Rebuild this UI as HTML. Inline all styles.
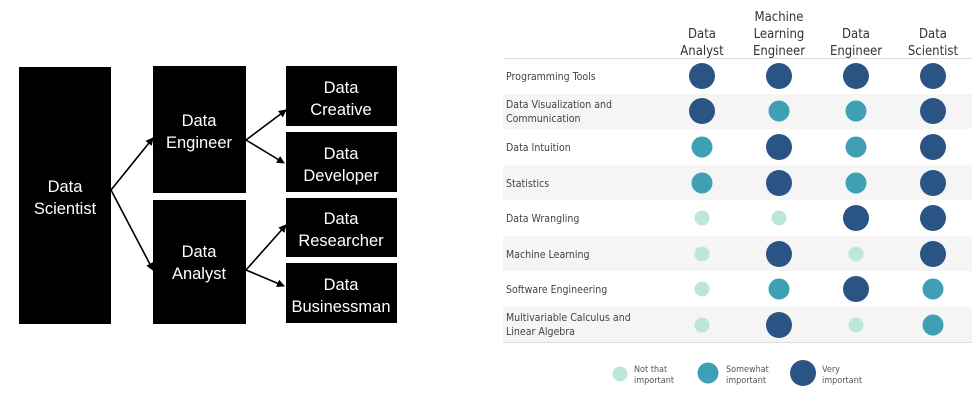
<!DOCTYPE html>
<html><head><meta charset="utf-8"><style>
html,body{margin:0;padding:0;background:#fff;width:978px;height:400px;overflow:hidden}
svg{display:block}
.b{font-family:"Liberation Sans",sans-serif;fill:#fff;font-size:16.5px;text-anchor:middle}
.h{font-family:"DejaVu Sans Condensed","Liberation Sans",sans-serif;fill:#333;font-size:13px;text-anchor:middle}
.r{font-family:"DejaVu Sans Condensed","Liberation Sans",sans-serif;fill:#444;font-size:10.5px}
.l{font-family:"DejaVu Sans Condensed","Liberation Sans",sans-serif;fill:#555;font-size:9px}
</style></head><body>
<svg width="978" height="400" viewBox="0 0 978 400" xmlns="http://www.w3.org/2000/svg">
<defs><marker id="a" markerWidth="8" markerHeight="8" refX="7" refY="4" orient="auto" markerUnits="userSpaceOnUse"><path d="M0,0 L8,4 L0,8 z" fill="#000"/></marker></defs>
<rect x="19" y="67" width="92" height="257" fill="#000"/>
<rect x="153" y="66" width="93" height="127" fill="#000"/>
<rect x="153" y="200" width="93" height="124" fill="#000"/>
<rect x="286" y="66" width="111" height="60" fill="#000"/>
<rect x="286" y="132" width="111" height="60" fill="#000"/>
<rect x="286" y="198" width="111" height="59" fill="#000"/>
<rect x="286" y="263" width="111" height="60" fill="#000"/>
<text class="b" x="65" y="192">Data</text><text class="b" x="65" y="214">Scientist</text>
<text class="b" x="199" y="126">Data</text><text class="b" x="199" y="148">Engineer</text>
<text class="b" x="199" y="257">Data</text><text class="b" x="199" y="279">Analyst</text>
<text class="b" x="341" y="93">Data</text><text class="b" x="341" y="115">Creative</text>
<text class="b" x="341" y="159">Data</text><text class="b" x="341" y="181">Developer</text>
<text class="b" x="341" y="224">Data</text><text class="b" x="341" y="246">Researcher</text>
<text class="b" x="341" y="290">Data</text><text class="b" x="341" y="312">Businessman</text>
<g stroke="#000" stroke-width="1.6" marker-end="url(#a)">
<line x1="111" y1="190" x2="153" y2="138"/>
<line x1="111" y1="190" x2="153" y2="270"/>
<line x1="246" y1="140" x2="286" y2="110"/>
<line x1="246" y1="140" x2="284" y2="163"/>
<line x1="246" y1="270" x2="286" y2="225"/>
<line x1="246" y1="270" x2="284" y2="286"/>
</g>
<g fill="#f5f5f5"><rect x="503" y="94" width="469" height="35"/><rect x="503" y="165" width="469" height="35"/><rect x="503" y="236" width="469" height="35"/><rect x="503" y="307" width="469" height="35"/></g>
<line x1="503" y1="58.5" x2="972" y2="58.5" stroke="#ddd"/>
<line x1="503" y1="342.5" x2="972" y2="342.5" stroke="#ddd"/>
<text class="h" x="702" y="38">Data</text><text class="h" x="702" y="55">Analyst</text>
<text class="h" x="779" y="21">Machine</text><text class="h" x="779" y="38">Learning</text><text class="h" x="779" y="55">Engineer</text>
<text class="h" x="856" y="38">Data</text><text class="h" x="856" y="55">Engineer</text>
<text class="h" x="933" y="38">Data</text><text class="h" x="933" y="55">Scientist</text>
<text class="r" x="506" y="80">Programming Tools</text>
<text class="r" x="506" y="108">Data Visualization and</text><text class="r" x="506" y="122">Communication</text>
<text class="r" x="506" y="151">Data Intuition</text>
<text class="r" x="506" y="187">Statistics</text>
<text class="r" x="506" y="222">Data Wrangling</text>
<text class="r" x="506" y="258">Machine Learning</text>
<text class="r" x="506" y="293">Software Engineering</text>
<text class="r" x="506" y="321">Multivariable Calculus and</text><text class="r" x="506" y="335">Linear Algebra</text>
<g>
<circle cx="702" cy="76" r="13" fill="#2a5483"/><circle cx="779" cy="76" r="13" fill="#2a5483"/><circle cx="856" cy="76" r="13" fill="#2a5483"/><circle cx="933" cy="76" r="13" fill="#2a5483"/>
<circle cx="702" cy="111" r="13" fill="#2a5483"/><circle cx="779" cy="111" r="10.5" fill="#3fa0b5"/><circle cx="856" cy="111" r="10.5" fill="#3fa0b5"/><circle cx="933" cy="111" r="13" fill="#2a5483"/>
<circle cx="702" cy="147" r="10.5" fill="#3fa0b5"/><circle cx="779" cy="147" r="13" fill="#2a5483"/><circle cx="856" cy="147" r="10.5" fill="#3fa0b5"/><circle cx="933" cy="147" r="13" fill="#2a5483"/>
<circle cx="702" cy="183" r="10.5" fill="#3fa0b5"/><circle cx="779" cy="183" r="13" fill="#2a5483"/><circle cx="856" cy="183" r="10.5" fill="#3fa0b5"/><circle cx="933" cy="183" r="13" fill="#2a5483"/>
<circle cx="702" cy="218" r="7.5" fill="#bde6da"/><circle cx="779" cy="218" r="7.5" fill="#bde6da"/><circle cx="856" cy="218" r="13" fill="#2a5483"/><circle cx="933" cy="218" r="13" fill="#2a5483"/>
<circle cx="702" cy="254" r="7.5" fill="#bde6da"/><circle cx="779" cy="254" r="13" fill="#2a5483"/><circle cx="856" cy="254" r="7.5" fill="#bde6da"/><circle cx="933" cy="254" r="13" fill="#2a5483"/>
<circle cx="702" cy="289" r="7.5" fill="#bde6da"/><circle cx="779" cy="289" r="10.5" fill="#3fa0b5"/><circle cx="856" cy="289" r="13" fill="#2a5483"/><circle cx="933" cy="289" r="10.5" fill="#3fa0b5"/>
<circle cx="702" cy="325" r="7.5" fill="#bde6da"/><circle cx="779" cy="325" r="13" fill="#2a5483"/><circle cx="856" cy="325" r="7.5" fill="#bde6da"/><circle cx="933" cy="325" r="10.5" fill="#3fa0b5"/>
</g>
<circle cx="620" cy="374" r="7.5" fill="#bde6da"/>
<circle cx="708" cy="373" r="10.5" fill="#3fa0b5"/>
<circle cx="803" cy="373" r="13" fill="#2a5483"/>
<text class="l" x="634" y="372">Not that</text><text class="l" x="634" y="383">important</text>
<text class="l" x="726" y="372">Somewhat</text><text class="l" x="726" y="383">important</text>
<text class="l" x="822" y="372">Very</text><text class="l" x="822" y="383">important</text>
</svg>
</body></html>
